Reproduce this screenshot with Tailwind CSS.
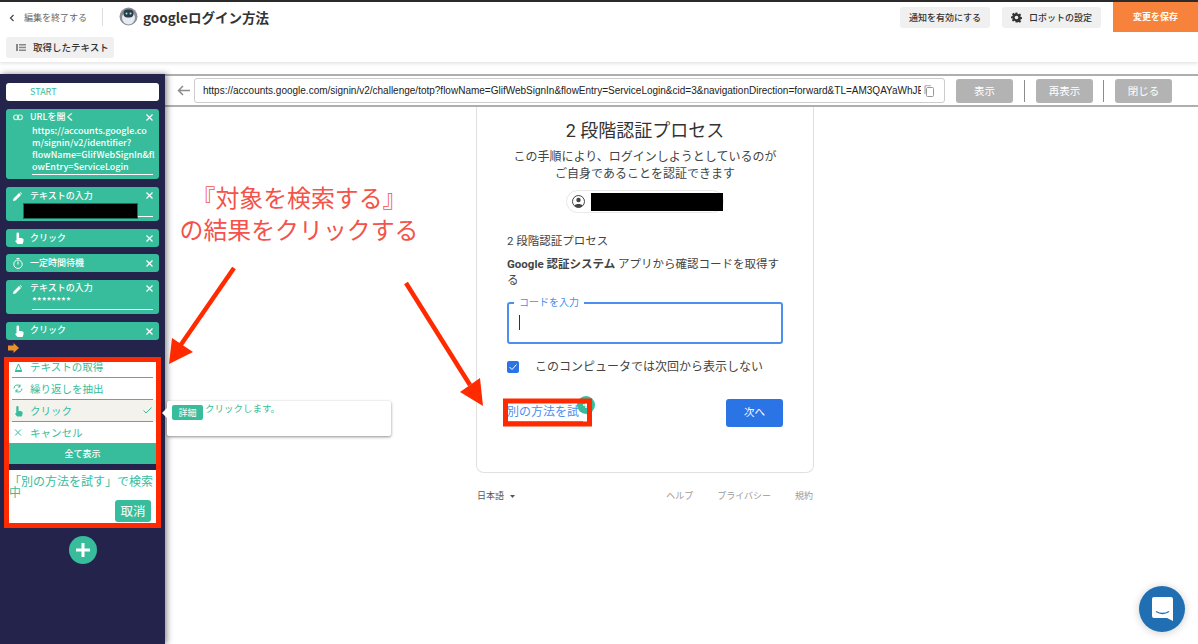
<!DOCTYPE html>
<html lang="ja"><head><meta charset="utf-8">
<script src="https://cdn.jsdelivr.net/npm/@tailwindcss/browser@4"></script>
</head>
<body class="m-0 bg-white">
<div class="relative w-[1198px] h-[644px] overflow-hidden flex flex-col bg-white font-['Noto_Sans_CJK_JP',sans-serif] text-[#333]">
  <!-- header -->
  <header class="h-[62px] shrink-0 border-t-2 border-[#2b2b2b] shadow-[0_1px_4px_rgba(0,0,0,0.15)] flex flex-col">
    <div class="h-[30px] flex items-start">
      <div class="flex items-center pl-[9px] pt-[7px] h-[24px] text-[#666] text-[9px]">
        <svg class="w-[6px] h-[8px] mr-[9px]" viewBox="0 0 6 8" fill="none" stroke="#444" stroke-width="1.2"><path d="M4.5 1 1.5 4l3 3"/></svg>
        <span>編集を終了する</span>
      </div>
      <div class="ml-[15px] mt-[6px] w-px h-[18px] bg-[#ddd]"></div>
      <svg class="ml-[16px] mt-[5px] w-[19px] h-[19px]" viewBox="0 0 19 19"><circle cx="9.5" cy="9.5" r="9" fill="#8a8f96"/><circle cx="9.5" cy="11" r="6.5" fill="#e6ebf2"/><rect x="4.5" y="2.5" width="10" height="8" rx="4" fill="#2f3a4a"/><circle cx="7.5" cy="6.5" r="1" fill="#8fd"/><circle cx="11.5" cy="6.5" r="1" fill="#8fd"/></svg>
      <h1 class="ml-[5px] mt-[5px] text-[13.5px] leading-[20px] font-bold text-[#333]">googleログイン方法</h1>
      <div class="ml-auto flex items-start">
        <button class="mt-[5px] w-[90px] h-[21px] rounded-[3px] bg-[#f0f0f0] text-[9px] font-medium text-[#333]">通知を有効にする</button>
        <button class="ml-[12px] mt-[5px] w-[99px] h-[21px] rounded-[3px] bg-[#f0f0f0] text-[9px] font-medium text-[#333] flex items-center justify-center gap-[7px]">
          <svg class="w-[11px] h-[11px]" viewBox="0 0 24 24" fill="#333"><path fill-rule="evenodd" d="M10 1h4l.6 3.100 2 .9L19.300 3.200l2.800 2.800-1.800 2.700.9 2 3.100.6v4l-3.100.6-.9 2 1.800 2.700-2.800 2.800-2.700-1.800-2 .9L14 23h-4l-.6-3.100-2-.9-2.700 1.800-2.800-2.800 1.800-2.700-.9-2L0 14v-4l3.100-.6.9-2L2.200 4.700 5 1.900l2.700 1.800 2-.9zM12 8a4 4 0 1 0 0 8 4 4 0 0 0 0-8z"/></svg>
          ロボットの設定</button>
        <button class="ml-[12px] w-[85px] h-[30px] bg-[#f6823c] text-white text-[9px] font-bold">変更を保存</button>
      </div>
    </div>
    <div class="pl-[6px] pt-[5px]">
      <button class="w-[108px] h-[21px] rounded-[3px] bg-[#f0f0f0] text-[9.500px] font-medium text-[#333] flex items-center pl-[10px] gap-[7px]">
        <svg class="w-[10px] h-[7px]" viewBox="0 0 10 7" fill="#888"><rect width="2" height="7"/><rect x="3" width="7" height="1.500"/><rect x="3" y="2.700" width="7" height="1.500"/><rect x="3" y="5.500" width="7" height="1.500"/></svg>
        取得したテキスト</button>
    </div>
  </header>

  <div class="mt-[12px] flex flex-1 min-h-0">
    <!-- sidebar -->
    <aside class="relative z-10 w-[165px] shrink-0 bg-[#23234b] shadow-[2px_0_6px_rgba(0,0,0,0.45)] pl-[6px] pr-[6px] pt-[9px] text-white">
      <div class="h-[18px] rounded-[3px] bg-white text-[#37bd9c] text-[9px] leading-[18px] pl-[24px]">START</div>

      <div class="relative mt-[8px] h-[70px] rounded-[3px] bg-[#37bd9c]">
        <svg class="absolute left-[7px] top-[5px] w-[10px] h-[7px]" viewBox="0 0 10 7" fill="none" stroke="#d5f0e8" stroke-width="1.200"><rect x=".6" y="1" width="5" height="4.600" rx="2.300"/><rect x="4.400" y="1" width="5" height="4.600" rx="2.300"/></svg>
        <span class="absolute left-[24px] top-[1px] text-[9px] leading-[14px] font-medium">URLを開く</span>
        <svg class="absolute right-[6px] top-[5px] w-[7px] h-[7px]" viewBox="0 0 7 7" stroke="#fff" stroke-width="1.200"><path d="M.5.500l6 6M6.500.500l-6 6"/></svg>
        <div class="absolute left-[26px] top-[16px] w-[121px] h-[50px] border-b border-white text-[9px] leading-[12px] font-medium whitespace-nowrap">https://accounts.google.co<br>m/signin/v2/identifier?<br>flowName=GlifWebSignIn&amp;fl<br>owEntry=ServiceLogin</div>
      </div>

      <div class="relative mt-[8px] h-[34px] rounded-[3px] bg-[#37bd9c]">
        <svg class="absolute left-[7px] top-[5px] w-[9px] h-[9px]" viewBox="0 0 9 9" fill="#fff"><path d="M0 9l.5-2.500L6 1l2 2-5.500 5.500zM6.700.300l.5-.300 1.800 1.800-.6.600z"/></svg>
        <span class="absolute left-[24px] top-[2px] text-[9px] leading-[14px] font-medium">テキストの入力</span>
        <svg class="absolute right-[6px] top-[5px] w-[7px] h-[7px]" viewBox="0 0 7 7" stroke="#fff" stroke-width="1.200"><path d="M.5.500l6 6M6.500.500l-6 6"/></svg>
        <div class="absolute left-[26px] top-[29px] w-[121px] border-b border-white"></div>
        <div class="absolute left-[17px] top-[16px] w-[115px] h-[16px] bg-black border border-[#1d6b58]"></div>
      </div>

      <div class="relative mt-[8px] h-[18px] rounded-[3px] bg-[#37bd9c]">
        <svg class="absolute left-[8px] top-[3px] w-[10px] h-[12px]" viewBox="0 0 10 12" fill="#fff"><path d="M2.500 4.500V1.800a1.300 1.300 0 0 1 2.600 0V6h2.400L9.500 7v2.500L8.500 12h-5L1 9l1.500-.8z"/></svg>
        <span class="absolute left-[24px] top-[2px] text-[9px] leading-[14px] font-medium">クリック</span>
        <svg class="absolute right-[6px] top-[6px] w-[7px] h-[7px]" viewBox="0 0 7 7" stroke="#fff" stroke-width="1.200"><path d="M.5.500l6 6M6.500.500l-6 6"/></svg>
      </div>

      <div class="relative mt-[7px] h-[18px] rounded-[3px] bg-[#37bd9c]">
        <svg class="absolute left-[7px] top-[4px] w-[10px] h-[11px]" viewBox="0 0 10 11" fill="none" stroke="#fff" stroke-width="1"><circle cx="5" cy="6.200" r="4.200"/><path d="M3.500.500h3M5 3.500v3"/></svg>
        <span class="absolute left-[24px] top-[2px] text-[9px] leading-[14px] font-medium">一定時間待機</span>
        <svg class="absolute right-[6px] top-[6px] w-[7px] h-[7px]" viewBox="0 0 7 7" stroke="#fff" stroke-width="1.200"><path d="M.5.500l6 6M6.500.500l-6 6"/></svg>
      </div>

      <div class="relative mt-[8px] h-[34px] rounded-[3px] bg-[#37bd9c]">
        <svg class="absolute left-[7px] top-[5px] w-[9px] h-[9px]" viewBox="0 0 9 9" fill="#fff"><path d="M0 9l.5-2.500L6 1l2 2-5.500 5.500zM6.700.300l.5-.300 1.800 1.800-.6.600z"/></svg>
        <span class="absolute left-[24px] top-[1px] text-[9px] leading-[14px] font-medium">テキストの入力</span>
        <svg class="absolute right-[6px] top-[5px] w-[7px] h-[7px]" viewBox="0 0 7 7" stroke="#fff" stroke-width="1.200"><path d="M.5.500l6 6M6.500.500l-6 6"/></svg>
        <div class="absolute left-[26px] top-[15px] w-[121px] h-[15px] border-b border-white text-[10px] leading-[12px] font-medium">********</div>
      </div>

      <div class="relative mt-[8px] h-[18px] rounded-[3px] bg-[#37bd9c]">
        <svg class="absolute left-[8px] top-[3px] w-[10px] h-[12px]" viewBox="0 0 10 12" fill="#fff"><path d="M2.500 4.500V1.800a1.300 1.300 0 0 1 2.600 0V6h2.400L9.500 7v2.500L8.500 12h-5L1 9l1.500-.8z"/></svg>
        <span class="absolute left-[24px] top-[1px] text-[9px] leading-[14px] font-medium">クリック</span>
        <svg class="absolute right-[6px] top-[6px] w-[7px] h-[7px]" viewBox="0 0 7 7" stroke="#fff" stroke-width="1.200"><path d="M.5.500l6 6M6.500.500l-6 6"/></svg>
      </div>

      <svg class="ml-[2px] mt-[3px] w-[11px] h-[10px] block" viewBox="0 0 11 10" fill="#e8922a"><path d="M0 2.500h5.500V0L11 5l-5.500 5V7.500H0z"/></svg>

      <!-- selection panel with red outline -->
      <div class="-ml-[2px] mt-[4px] w-[157px] h-[171px] border-[5px] border-[#ff2a00] bg-[#23234b] flex flex-col">
        <ul class="bg-white text-[#37bd9c] text-[10.500px] h-[81px] shrink-0">
          <li class="h-[16px] mx-[3px] border-b border-[#37bd9c] flex items-center gap-[7px] pl-[2px] pb-[5px]">
            <svg class="w-[9px] h-[9px] shrink-0" viewBox="0 0 9 9" fill="none" stroke="#37bd9c"><path d="M4.500 1 1.500 7.500h6zM1 8.500h7"/></svg>テキストの取得</li>
          <li class="h-[22px] mx-[3px] border-b border-[#37bd9c] flex items-center gap-[7px] pl-[1px]">
            <svg class="w-[10px] h-[9px] shrink-0" viewBox="0 0 10 9" fill="none" stroke="#37bd9c"><path d="M1 4.500a3.500 3.500 0 0 1 6-2.500M9 4.500a3.500 3.500 0 0 1-6 2.500M7 .500V3H4.800M3 8.500V6h2.200"/></svg>繰り返しを抽出</li>
          <li class="h-[22px] px-[3px] bg-[#f3f2ed] relative flex items-center gap-[7px] pl-[5px]">
            <svg class="w-[9px] h-[12px] shrink-0" viewBox="0 0 10 12" fill="#37bd9c"><path d="M2.500 4.500V1.800a1.300 1.300 0 0 1 2.600 0V6h2.400L9.500 7v2.500L8.500 12h-5L1 9l1.500-.8z"/></svg>クリック
            <svg class="absolute right-[4px] top-[7px] w-[9px] h-[7px]" viewBox="0 0 9 7" fill="none" stroke="#37bd9c"><path d="M.5 3.500 3 6 8.500.500"/></svg>
            <span class="absolute left-[3px] right-[3px] bottom-0 border-b border-[#37bd9c]"></span></li>
          <li class="h-[21px] mx-[3px] flex items-center gap-[8px] pl-[2px]">
            <svg class="w-[8px] h-[7px] shrink-0" viewBox="0 0 8 7" stroke="#37bd9c"><path d="M1 .500l6 6M7 .500l-6 6"/></svg>キャンセル</li>
        </ul>
        <button class="h-[21px] shrink-0 bg-[#37bd9c] text-white text-[9px] font-medium">全て表示</button>
        <div class="mt-[6px] flex-1 bg-white relative text-[#37bd9c] text-[12px]">
          <p class="pt-[5px] leading-[11px]">「別の方法を試す」で検索中</p>
          <button class="absolute right-[5px] bottom-[1px] w-[36px] h-[22px] rounded-[3px] bg-[#37bd9c] text-white text-[12.500px]">取消</button>
        </div>
      </div>

      <div class="mt-[8px] mx-auto w-[28px] h-[28px] rounded-full bg-[#37bd9c] flex items-center justify-center">
        <svg class="w-[14px] h-[14px]" viewBox="0 0 14 14" stroke="#fff" stroke-width="3"><path d="M7 0v14M0 7h14"/></svg>
      </div>
    </aside>

    <!-- main -->
    <main class="flex-1 min-w-0 flex flex-col">
      <div class="relative z-[5] h-[33px] shrink-0 border-y-2 border-[#8c8c8c]/70 bg-white flex items-center">
        <svg class="ml-[12px] w-[13px] h-[11px] shrink-0" viewBox="0 0 13 11" fill="none" stroke="#8c8c8c" stroke-width="1.500"><path d="M13 5.500H1.500M6 1 1.500 5.500 6 10"/></svg>
        <div class="ml-[4px] w-[751px] h-[25px] shrink-0 border border-[#ccc] rounded-[3px] flex items-center pl-[7px] pr-[5px]">
          <span class="ml-[1px] w-[718px] overflow-hidden whitespace-nowrap font-['Liberation_Sans',sans-serif] text-[10px] text-[#222]">https://accounts.google.com/signin/v2/challenge/totp?flowName=GlifWebSignIn&amp;flowEntry=ServiceLogin&amp;cid=3&amp;navigationDirection=forward&amp;TL=AM3QAYaWhJE</span>
          <svg class="ml-[3px] w-[10px] h-[12px] shrink-0" viewBox="0 0 10 12" fill="none" stroke="#999"><rect x="2.500" y="2.500" width="7" height="9" rx="1"/><path d="M1 9V1.500A1 1 0 0 1 2 .500h5" stroke="#bbb" stroke-width="1.500"/></svg>
        </div>
        <button class="ml-[11px] w-[57px] h-[24px] rounded-[3px] bg-[#b3b3b3] text-white text-[10.500px]">表示</button>
        <span class="ml-[11px] w-px h-[22px] bg-[#8c8c8c]"></span>
        <button class="ml-[11px] w-[57px] h-[24px] rounded-[3px] bg-[#b3b3b3] text-white text-[10.500px]">再表示</button>
        <span class="ml-[10px] w-px h-[22px] bg-[#8c8c8c]"></span>
        <button class="ml-[11px] w-[57px] h-[24px] rounded-[3px] bg-[#b3b3b3] text-white text-[10.500px]">閉じる</button>
      </div>

      <div class="pl-[311px] font-['Roboto','Noto_Sans_CJK_JP',sans-serif]">
        <section class="w-[338px] h-[366px] border border-t-0 border-[#e0e0e0] rounded-b-lg px-[30px] relative">
          <h2 class="pt-[11px] text-center text-[18px] leading-[26px] text-[#333]">2 段階認証プロセス</h2>
          <p class="mt-[5px] text-center text-[12px] leading-[17px] text-[#444]">この手順により、ログインしようとしているのが<br>ご自身であることを認証できます</p>
          <div class="mt-[7px] ml-[59px] w-[158px] h-[23px] rounded-full border border-[#e8e8e8] flex items-center pl-[5px]">
            <svg class="w-[13px] h-[13px] shrink-0" viewBox="0 0 13 13"><circle cx="6.500" cy="6.500" r="6" fill="none" stroke="#444"/><circle cx="6.500" cy="5" r="2.200" fill="#444"/><path d="M2.500 10.500c1-2 7-2 8 0a5 5 0 0 1-8 0z" fill="#444"/></svg>
            <span class="ml-[6px] w-[132px] h-[18px] bg-black shrink-0"></span>
          </div>
          <p class="mt-[20px] text-[11.500px] leading-[17px] text-[#444]">2 段階認証プロセス</p>
          <p class="mt-[6px] w-[276px] text-[11.500px] leading-[16px] text-[#444]"><b class="font-bold">Google 認証システム</b> アプリから確認コードを取得する</p>
          <div class="relative mt-[14px] w-[276px] h-[42px] border-2 border-[#4d8fef] rounded-[3px]">
            <span class="absolute left-[5px] -top-[8px] bg-white px-[5px] text-[10px] leading-[13px] text-[#4d8fef]">コードを入力</span>
            <span class="absolute left-[10px] top-[11px] w-px h-[15px] bg-[#333]"></span>
          </div>
          <div class="mt-[15px] pt-[2px] flex items-center h-[14px]">
            <span class="w-[12px] h-[12px] rounded-[2px] bg-[#2b74e6] flex items-center justify-center">
              <svg class="w-[8px] h-[6px]" viewBox="0 0 8 6" fill="none" stroke="#fff"><path d="M.5 3 3 5.500 7.500.500"/></svg></span>
            <span class="ml-[16px] text-[12px] text-[#444]">このコンピュータでは次回から表示しない</span>
          </div>
          <div class="mt-[26px] flex items-center justify-between">
            <span class="text-[12px] text-[#4d8fef] w-[76px] overflow-hidden whitespace-nowrap border-b border-[#f6823c] leading-[17px] bg-white">別の方法を試す</span>
            <button class="w-[57px] h-[28px] rounded-[3px] bg-[#2b74e6] text-white text-[10.500px]">次へ</button>
          </div>
        </section>
        <div class="w-[337px] mt-[15px] flex items-center text-[9px] leading-[16px] text-[#9a9a9a]">
          <span class="text-[#555] ml-[1px]">日本語</span>
          <svg class="ml-[6px] w-[5px] h-[3px]" viewBox="0 0 5 3" fill="#555"><path d="M0 0h5L2.500 3z"/></svg>
          <span class="ml-auto">ヘルプ</span>
          <span class="ml-[24px]">プライバシー</span>
          <span class="ml-[24px]">規約</span>
        </div>
      </div>
    </main>
  </div>

  <!-- tooltip over content -->
  <div class="absolute z-20 left-[167px] top-[401px] w-[224px] h-[35px] rounded-[2px] bg-white shadow-[0_1px_3px_rgba(0,0,0,0.45)] text-[9.500px] text-[#37bd9c]">
    <span class="absolute -left-[5px] top-[7px] w-0 h-0 border-y-[5px] border-y-transparent border-r-[5px] border-r-white"></span>
    <span class="absolute left-[5px] top-[4px] w-[31px] h-[15px] rounded-[2px] bg-[#37bd9c] text-white text-[9px] leading-[15px] text-center">詳細</span>
    <span class="absolute left-[38px] top-[1px] leading-[13px]">クリックします。</span>
  </div>

  <!-- annotations -->
  <div class="absolute z-30 left-[159px] top-[181px] w-[280px] text-center text-[#f4524a] text-[23.900px] leading-[32px]">『対象を検索する』<br>の結果をクリックする</div>
  <svg class="absolute z-30 left-0 top-0 w-[1198px] h-[644px] pointer-events-none" viewBox="0 0 1198 644">
    <path d="M234 268 180 346" stroke="#ff2a00" stroke-width="4.500" fill="none"/>
    <path d="M169 364 172 338 193 352z" fill="#ff2a00"/>
    <path d="M406 283 470 385" stroke="#ff2a00" stroke-width="4.500" fill="none"/>
    <path d="M483 406 460 392 480 378z" fill="#ff2a00"/>
    <circle cx="586" cy="405" r="9" fill="#37bd9c"/>
    <path d="M583 405h6M586 402v6" stroke="#fff" stroke-width="1.500"/>
    <rect x="505.500" y="401" width="84" height="23" fill="none" stroke="#ff2a00" stroke-width="5"/>
  </svg>

  <!-- chat launcher -->
  <div class="absolute z-30 left-[1139px] top-[586px] w-[46px] h-[46px] rounded-full bg-[#1f6fb2] shadow-[0_1px_8px_rgba(0,0,0,0.2)] flex items-center justify-center">
    <svg class="w-[21px] h-[24px]" viewBox="0 0 21 24"><path d="M2 0h17a2 2 0 0 1 2 2v22l-6-3H2a2 2 0 0 1-2-2V2a2 2 0 0 1 2-2z" fill="#fff"/><path d="M4 14.500c4 2.500 9 2.500 13 0" fill="none" stroke="#1f6fb2" stroke-width="1.300"/></svg>
  </div>
</div>
</body></html>
